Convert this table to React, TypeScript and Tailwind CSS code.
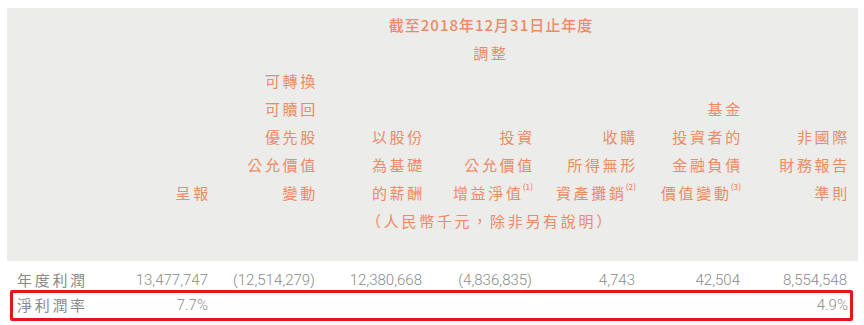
import React from "react";

const cols = "grid grid-cols-[94px_107px_107px_107px_110px_103px_105px_107px]";

type Head = { lines: string[]; sup?: string };

const heads: Head[] = [
  { lines: ["呈報"] },
  { lines: ["可轉換", "可贖回", "優先股", "公允價值", "變動"] },
  { lines: ["以股份", "為基礎", "的薪酬"] },
  { lines: ["投資", "公允價值", "增益淨值"], sup: "(1)" },
  { lines: ["收購", "所得無形", "資產攤銷"], sup: "(2)" },
  { lines: ["基金", "投資者的", "金融負債", "價值變動"], sup: "(3)" },
  { lines: ["非國際", "財務報告", "準則"] },
];

const profit = ["13,477,747", "(12,514,279)", "12,380,668", "(4,836,835)", "4,743", "42,504", "8,554,548"];

const cjk = { fontFamily: '"Noto Sans CJK TC", "Noto Sans", sans-serif' };
const num = { fontFamily: '"Roboto", "Liberation Sans", sans-serif' };

export default function App() {
  return (
    <div className="w-[864px] h-[325px] bg-white pt-2" style={cjk}>
      {/* header panel */}
      <div className="ml-[7px] w-[851px] h-[253px] bg-[#ececeb] pt-[3px] text-[15px] leading-[28px] text-[#ee8a64] tracking-[2.7px]">
        <div className={cols}>
          <div className="col-start-4 col-span-3 pl-[32px] text-center font-medium tracking-[1px]">
            截至2018年12月31日止年度
          </div>
          <div className="col-start-4 col-span-3 pl-[32px] text-center">調整</div>
        </div>
        <div className={cols + " items-end"}>
          <div />
          {heads.map((h, i) => (
            <div key={i} className="text-right -mr-[3px]">
              {h.lines.map((l, j) => (
                <div key={j}>
                  {l}
                  {h.sup && j === h.lines.length - 1 && (
                    <span className="inline-block align-top text-[8px] font-medium leading-[16px] tracking-normal mr-[2px] -ml-[1px]">
                      {h.sup}
                    </span>
                  )}
                </div>
              ))}
            </div>
          ))}
        </div>
        <div className={cols}>
          <div className="col-start-3 col-span-5 pl-[32px] text-center">（人民幣千元，除非另有說明）</div>
        </div>
      </div>

      {/* rows */}
      <div className={"ml-[7px] w-[851px] h-[29px] pt-2 leading-[20px] text-[15px] text-[#8a8a8a] items-center " + cols}>
        <div className="pl-[10px] tracking-[2.7px]">年度利潤</div>
        {profit.map((p, i) => (
          <div key={i} className="text-right font-light" style={num}>
            {p}
          </div>
        ))}
      </div>
      <div className="ml-[10px] w-[843px] h-[31px] border-[3px] border-[#e8141b] rounded-[2px] flex items-center text-[15px] text-[#8a8a8a]">
        <div className="grid grid-cols-[88px_107px_501px_139px] w-full items-center">
          <div className="pl-[4px] tracking-[2.7px]">淨利潤率</div>
          <div className="text-right font-light" style={num}>7.7%</div>
          <div />
          <div className="text-right font-light" style={num}>4.9%</div>
        </div>
      </div>
    </div>
  );
}
